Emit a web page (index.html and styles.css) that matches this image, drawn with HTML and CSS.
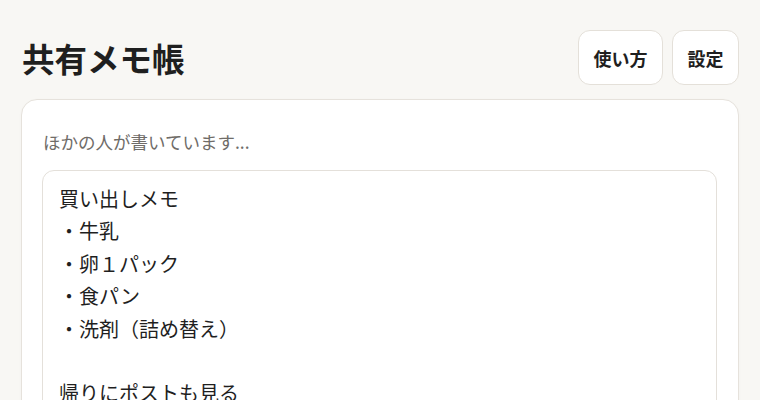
FILE: index.html
```html
<!DOCTYPE html>
<html lang="ja">
<head>
<meta charset="utf-8">
<title>共有メモ帳</title>
<link rel="stylesheet" href="styles.css">
</head>
<body>
<div class="page">
  <header class="header">
    <h1 class="title">共有メモ帳</h1>
    <div class="actions">
      <button class="btn" type="button">使い方</button>
      <button class="btn" type="button">設定</button>
    </div>
  </header>
  <main class="card">
    <p class="status">ほかの人が書いています...</p>
    <div class="editor">買い出しメモ
・牛乳
・卵１パック
・食パン
・洗剤（詰め替え）

帰りにポストも見る</div>
  </main>
</div>
</body>
</html>
```

FILE: styles.css
```css
* { box-sizing: border-box; }
html, body {
  margin: 0;
  padding: 0;
  background: #f8f7f4;
  font-family: "Noto Sans CJK JP", "Noto Sans", sans-serif;
  color: #1f1f1f;
}
.page {
  padding: 30px 21px 0 21px;
}
.header {
  display: flex;
  align-items: center;
  justify-content: space-between;
  height: 55px;
  margin-bottom: 14px;
}
.title {
  margin: 0 0 0 1px;
  font-size: 32.5px;
  font-weight: 700;
  line-height: 1.2;
  color: #1f1f1f;
}
.actions {
  display: flex;
  gap: 9px;
}
.btn {
  font-family: inherit;
  font-size: 18px;
  font-weight: 700;
  color: #1f1f1f;
  background: #ffffff;
  border: 1px solid #e4e0d9;
  border-radius: 12px;
  height: 55px;
  padding: 0 14.5px;
  line-height: 1;
  cursor: pointer;
}
.card {
  background: #ffffff;
  border: 1px solid #e6e2dc;
  border-radius: 16px;
  padding: 28px 21px 20px 20px;
  box-shadow: 0 1px 3px rgba(0, 0, 0, 0.03);
  height: 400px;
}
.status {
  margin: 0 0 14px 1px;
  font-size: 17.5px;
  line-height: 28px;
  color: #6f6c68;
}
.editor {
  border: 1px solid #e4e0da;
  border-radius: 12px;
  padding: 12px 16px;
  font-size: 20px;
  line-height: 32.4px;
  color: #1f1f1f;
  white-space: pre-wrap;
  min-height: 300px;
}
```
